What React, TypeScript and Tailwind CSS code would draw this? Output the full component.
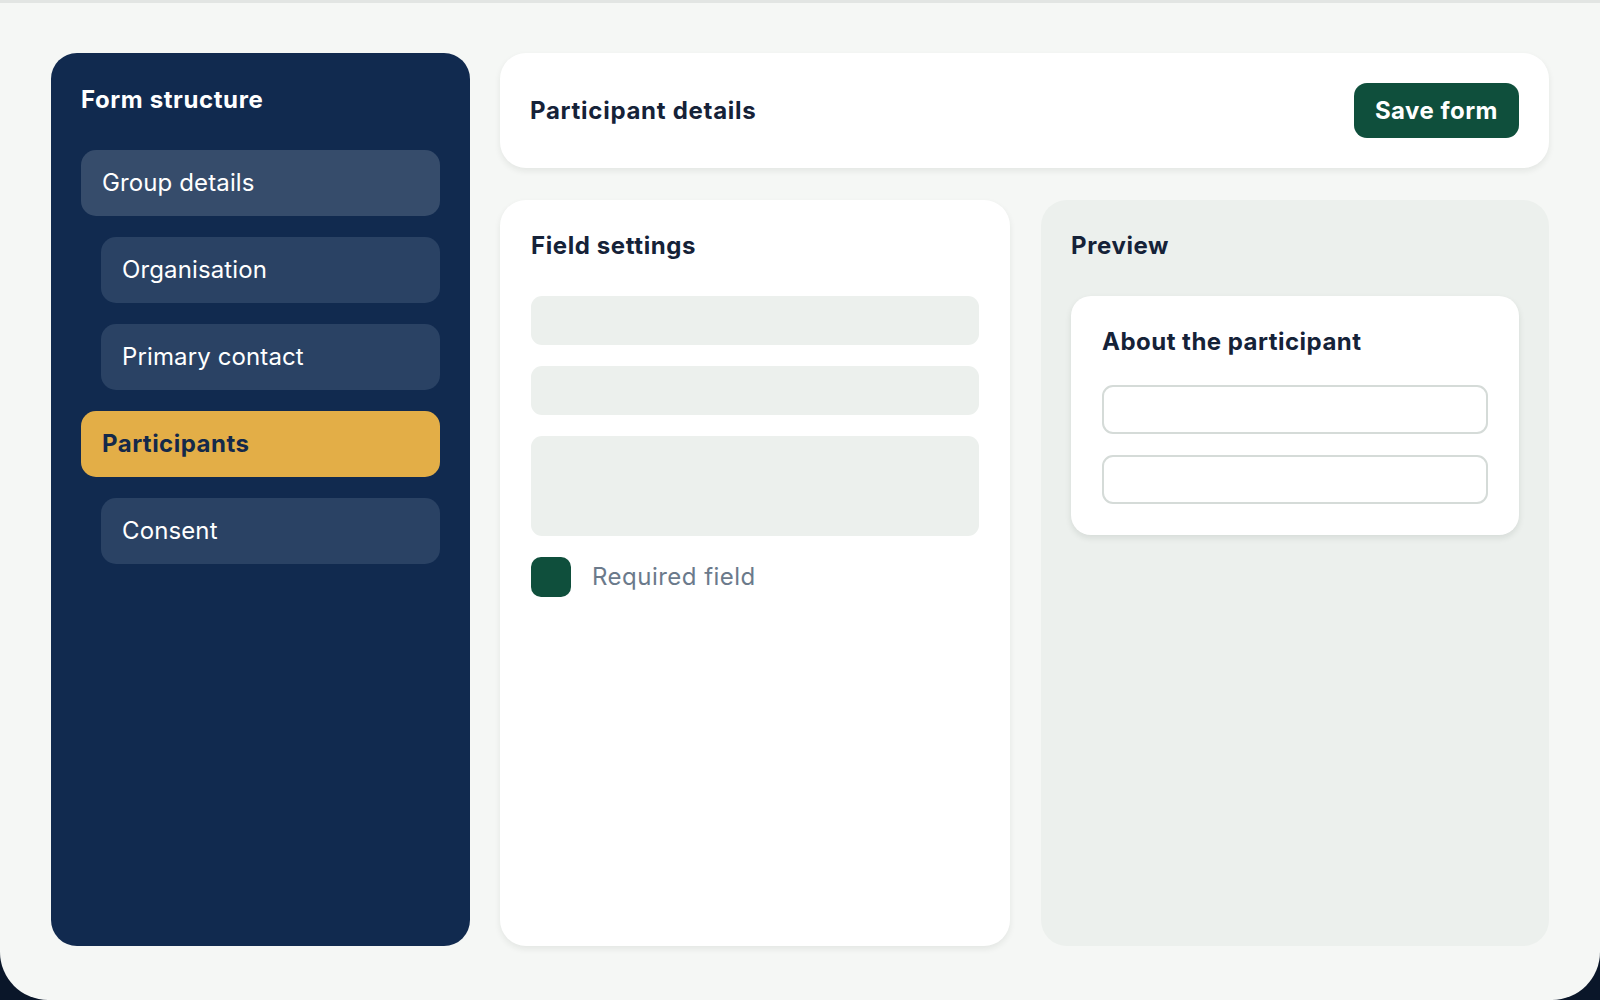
const font = { fontFamily: "Inter, 'Noto Sans', sans-serif" };

const sections = [
	{ label: "Group details", level: 0 },
	{ label: "Organisation", level: 1 },
	{ label: "Primary contact", level: 1 },
	{ label: "Participants", level: 0, active: true },
	{ label: "Consent", level: 1 },
];

export default function App() {
	return (
		<div className="h-[1000px] w-[1600px] bg-[#0a1629]" style={font}>
			<div className="flex h-full gap-[30px] rounded-b-[48px] border-t-[3px] border-[#e2e5e3] bg-[#f5f7f5] px-[51px] pb-[54px] pt-[50px]">
				<Sidebar />
				<div className="flex flex-1 flex-col gap-[32px]">
					<Header />
					<div className="flex flex-1 gap-[31px]">
						<FieldSettings />
						<Preview />
					</div>
				</div>
			</div>
		</div>
	);
}

function Sidebar() {
	return (
		<aside className="flex w-[419px] shrink-0 flex-col rounded-[26px] bg-[#112a4f] px-[30px] pt-[32px]">
			<h2 className="text-[24px] font-bold leading-[30px] tracking-[0.025em] text-white">
				Form structure
			</h2>
			<nav className="mt-[35px] flex flex-col gap-[21px]">
				{sections.map((s) => (
					<div
						key={s.label}
						className={`flex h-[66px] items-center rounded-[15px] px-[21px] text-[24px] ${
							s.level === 1 ? "ml-[20px]" : ""
						} ${
							s.active
								? "bg-[#e3ae47] font-bold tracking-[0.02em] text-[#14294a]"
								: s.level === 0
									? "bg-[#364c6b] tracking-[0.005em] text-white"
									: "bg-[#2a4264] tracking-[0.005em] text-white"
						}`}
					>
						{s.label}
					</div>
				))}
			</nav>
		</aside>
	);
}

function Header() {
	return (
		<div className="flex h-[115px] items-center justify-between rounded-[26px] bg-white px-[30px] shadow-[0_3px_6px_rgba(20,40,30,0.08)]">
			<h1 className="text-[24px] font-bold tracking-[0.03em] text-[#152238]">
				Participant details
			</h1>
			<button className="h-[55px] rounded-[13px] bg-[#0f4f3c] px-[21px] text-[24px] font-bold tracking-[0.02em] text-white">
				Save form
			</button>
		</div>
	);
}

function FieldSettings() {
	return (
		<section className="flex flex-1 flex-col rounded-[26px] bg-white px-[31px] pt-[31px] shadow-[0_3px_6px_rgba(20,40,30,0.08)]">
			<h3 className="text-[24px] font-bold leading-[30px] tracking-[0.025em] text-[#152238]">
				Field settings
			</h3>
			<div className="mt-[35px] flex flex-col gap-[21px]">
				<div className="h-[49px] rounded-[11px] bg-[#ecf0ed]" />
				<div className="h-[49px] rounded-[11px] bg-[#ecf0ed]" />
				<div className="h-[100px] rounded-[11px] bg-[#ecf0ed]" />
				<label className="flex items-center gap-[21px]">
					<span className="h-[40px] w-[40px] rounded-[10px] bg-[#0f4f3c]" />
					<span className="text-[24px] tracking-[0.02em] text-[#6b7a8b]">
						Required field
					</span>
				</label>
			</div>
		</section>
	);
}

function Preview() {
	return (
		<section className="flex flex-1 flex-col rounded-[26px] bg-[#ecf0ed] px-[30px] pt-[31px]">
			<h3 className="text-[24px] font-bold leading-[30px] tracking-[0.025em] text-[#152238]">
				Preview
			</h3>
			<div className="mt-[35px] rounded-[20px] bg-white px-[31px] pb-[31px] pt-[31px] shadow-[0_3px_6px_rgba(20,40,30,0.1)]">
				<h4 className="text-[24px] font-bold leading-[30px] tracking-[0.02em] text-[#152238]">
					About the participant
				</h4>
				<div className="mt-[28px] flex flex-col gap-[21px]">
					<div className="h-[49px] rounded-[11px] border-2 border-[#d5dbd8] bg-white" />
					<div className="h-[49px] rounded-[11px] border-2 border-[#d5dbd8] bg-white" />
				</div>
			</div>
		</section>
	);
}
